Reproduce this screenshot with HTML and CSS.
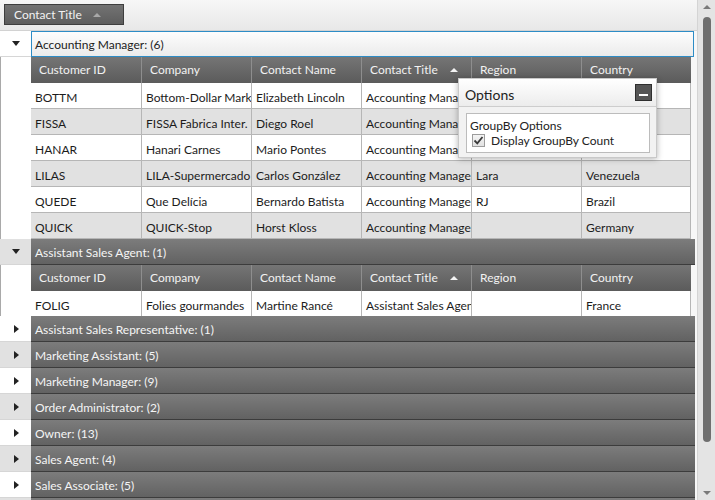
FILE: index.html
```html
<!DOCTYPE html>
<html>
<head>
<meta charset="utf-8">
<link rel="stylesheet" href="styles.css">
</head>
<body>
<div class="app">
  <div class="grid">
    <div class="groupby-bar">
      <div class="chip"><span>Contact Title</span><span class="tri-up light"></span></div>
    </div>

    <div class="group">
      <div class="group-row">
        <div class="expander"><span class="tri-down"></span></div>
        <div class="group-title selected">Accounting Manager: (6)</div>
      </div>
      <div class="group-body">
        <div class="gutter"></div>
        <div class="table">
          <div class="hdr-row">
            <div class="hcell">Customer ID</div>
            <div class="hcell">Company</div>
            <div class="hcell">Contact Name</div>
            <div class="hcell sorted">Contact Title<span class="tri-up"></span></div>
            <div class="hcell">Region</div>
            <div class="hcell">Country</div>
          </div>
          <div class="drow"><div class="cell">BOTTM</div><div class="cell">Bottom-Dollar Markets</div><div class="cell">Elizabeth Lincoln</div><div class="cell">Accounting Manager</div><div class="cell">BC</div><div class="cell">Canada</div></div>
          <div class="drow alt"><div class="cell">FISSA</div><div class="cell">FISSA Fabrica Inter. Salchichas S.A.</div><div class="cell">Diego Roel</div><div class="cell">Accounting Manager</div><div class="cell"></div><div class="cell">Spain</div></div>
          <div class="drow"><div class="cell">HANAR</div><div class="cell">Hanari Carnes</div><div class="cell">Mario Pontes</div><div class="cell">Accounting Manager</div><div class="cell">RJ</div><div class="cell">Brazil</div></div>
          <div class="drow alt"><div class="cell">LILAS</div><div class="cell">LILA-Supermercado</div><div class="cell">Carlos González</div><div class="cell">Accounting Manager</div><div class="cell">Lara</div><div class="cell">Venezuela</div></div>
          <div class="drow"><div class="cell">QUEDE</div><div class="cell">Que Delícia</div><div class="cell">Bernardo Batista</div><div class="cell">Accounting Manager</div><div class="cell">RJ</div><div class="cell">Brazil</div></div>
          <div class="drow alt"><div class="cell">QUICK</div><div class="cell">QUICK-Stop</div><div class="cell">Horst Kloss</div><div class="cell">Accounting Manager</div><div class="cell"></div><div class="cell">Germany</div></div>
        </div>
      </div>
    </div>

    <div class="group">
      <div class="group-row">
        <div class="expander grey"><span class="tri-down"></span></div>
        <div class="group-title">Assistant Sales Agent: (1)</div>
      </div>
      <div class="group-body">
        <div class="gutter"></div>
        <div class="table">
          <div class="hdr-row">
            <div class="hcell">Customer ID</div>
            <div class="hcell">Company</div>
            <div class="hcell">Contact Name</div>
            <div class="hcell sorted">Contact Title<span class="tri-up"></span></div>
            <div class="hcell">Region</div>
            <div class="hcell">Country</div>
          </div>
          <div class="drow last"><div class="cell">FOLIG</div><div class="cell">Folies gourmandes</div><div class="cell">Martine Rancé</div><div class="cell">Assistant Sales Agent</div><div class="cell"></div><div class="cell">France</div></div>
        </div>
      </div>
    </div>

    <div class="group-row"><div class="expander"><span class="tri-right"></span></div><div class="group-title">Assistant Sales Representative: (1)</div></div>
    <div class="group-row"><div class="expander grey"><span class="tri-right"></span></div><div class="group-title">Marketing Assistant: (5)</div></div>
    <div class="group-row"><div class="expander"><span class="tri-right"></span></div><div class="group-title">Marketing Manager: (9)</div></div>
    <div class="group-row"><div class="expander grey"><span class="tri-right"></span></div><div class="group-title">Order Administrator: (2)</div></div>
    <div class="group-row"><div class="expander"><span class="tri-right"></span></div><div class="group-title">Owner: (13)</div></div>
    <div class="group-row"><div class="expander grey"><span class="tri-right"></span></div><div class="group-title">Sales Agent: (4)</div></div>
    <div class="group-row"><div class="expander"><span class="tri-right"></span></div><div class="group-title">Sales Associate: (5)</div></div>
    <div class="group-row"><div class="expander grey"><span class="tri-right"></span></div><div class="group-title">Sales Manager: (3)</div></div>
  </div>

  <div class="scrollbar">
    <div class="sb-btn"><span class="sb-up"></span></div>
    <div class="sb-thumb"></div>
    <div class="sb-fill"></div>
    <div class="sb-btn"><span class="sb-down"></span></div>
  </div>

  <div class="options">
    <div class="opt-title">
      <span class="opt-title-text">Options</span>
      <span class="opt-min"><span class="opt-bar"></span></span>
    </div>
    <div class="opt-body">
      <div class="opt-box">
        <div class="opt-label">GroupBy Options</div>
        <label class="opt-check">
          <span class="checkbox">
            <svg width="11" height="11" viewBox="0 0 11 11"><path d="M1.5 5.5 L4.3 8.3 L9.5 2" fill="none" stroke="#3a3a3a" stroke-width="1.8"/></svg>
          </span>
          <span>Display GroupBy Count</span>
        </label>
      </div>
    </div>
  </div>
</div>
</body>
</html>
```

FILE: styles.css
```css
body {
  margin: 0;
  font-family: Lato, "Open Sans", sans-serif;
  font-size: 12px;
  color: #1c1c1c;
}

.app {
  position: relative;
  width: 715px;
  height: 500px;
  overflow: hidden;
  display: flex;
  background: #f7f7f7;
}

.grid {
  width: 697px;
  flex: none;
  display: flex;
  flex-direction: column;
}

.groupby-bar {
  height: 26px;
  padding: 4px 0 0 4px;
  border-bottom: 1px solid #d2d2d2;
  background: linear-gradient(#f7f7f7, #e8e8e8);
  flex: none;
}

.chip {
  box-sizing: border-box;
  width: 120px;
  height: 21px;
  border: 1px solid #3e3e3e;
  background: linear-gradient(#737373, #5d5d5d);
  color: #f2f2f2;
  display: flex;
  align-items: center;
  padding-left: 9px;
  gap: 11px;
}

.tri-up {
  width: 0;
  height: 0;
  border-left: 4px solid transparent;
  border-right: 4px solid transparent;
  border-bottom: 4px solid #f4f4f4;
}

.tri-up.light {
  border-bottom-color: #a8a8a8;
}

.tri-down {
  width: 0;
  height: 0;
  border-left: 4px solid transparent;
  border-right: 4px solid transparent;
  border-top: 5px solid #222;
}

.tri-right {
  width: 0;
  height: 0;
  margin-left: 2px;
  border-top: 4px solid transparent;
  border-bottom: 4px solid transparent;
  border-left: 5px solid #222;
}

.group {
  flex: none;
}

.group-row {
  display: flex;
  height: 26px;
  flex: none;
}

.expander {
  width: 31px;
  flex: none;
  box-sizing: border-box;
  display: flex;
  align-items: center;
  justify-content: center;
  background: #ffffff;
  border-bottom: 1px solid #d6d6d6;
}

.expander.grey {
  background: #e1e1e1;
}

.group-title {
  flex: 1;
  margin-right: 2px;
  box-sizing: border-box;
  display: flex;
  align-items: center;
  padding-left: 4px;
  padding-top: 1px;
  color: #f5f5f5;
  background: linear-gradient(#7c7c7c, #626262);
  border-bottom: 1px solid #3c3c3c;
  white-space: nowrap;
}

.group-title.selected {
  margin-right: 3px;
  padding-left: 3px;
  padding-top: 0;
  color: #222;
  background: linear-gradient(#fdfdfd, #ebebeb);
  border: 1px solid #2d8cc6;
}

.group-body {
  display: flex;
}

.gutter {
  width: 31px;
  flex: none;
  box-sizing: border-box;
  background: #ffffff;
  border-left: 1px solid #a9a9a9;
}

.table {
  width: 660px;
  flex: none;
}

.hdr-row {
  display: flex;
  height: 26px;
  background: linear-gradient(#757575, #5b5b5b);
  color: #f2f2f2;
}

.hcell {
  width: 110px;
  box-sizing: border-box;
  display: flex;
  align-items: center;
  padding-left: 8px;
  padding-bottom: 1px;
  border-left: 1px solid #8e8e8e;
  white-space: nowrap;
}

.hcell:first-child {
  border-left: none;
}

.hcell.sorted {
  justify-content: space-between;
  padding-right: 13px;
}

.drow {
  display: flex;
  height: 26px;
  box-sizing: border-box;
  background: #ffffff;
  border-bottom: 1px solid #b6b6b6;
  border-right: 1px solid #b6b6b6;
}

.drow.alt {
  background: #e1e1e1;
}

.drow.last {
  height: 25px;
  border-bottom: none;
}

.cell {
  width: 110px;
  flex: none;
  box-sizing: border-box;
  display: flex;
  align-items: center;
  padding-left: 4px;
  padding-top: 3px;
  border-left: 1px solid #b6b6b6;
  white-space: nowrap;
  overflow: hidden;
}

.cell:first-child {
  border-left: none;
}

.cell:last-child {
  width: 109px;
}

/* scrollbar */
.scrollbar {
  width: 18px;
  flex: none;
  box-sizing: border-box;
  border-left: 1px solid #d4d4d4;
  background: #e4e4e4;
  display: flex;
  flex-direction: column;
  align-items: center;
}

.sb-btn {
  height: 14px;
  width: 100%;
  display: flex;
  align-items: center;
  justify-content: center;
  flex: none;
}

.sb-up {
  width: 0;
  height: 0;
  border-left: 4px solid transparent;
  border-right: 4px solid transparent;
  border-bottom: 4px solid #7a7a7a;
}

.sb-down {
  width: 0;
  height: 0;
  border-left: 4px solid transparent;
  border-right: 4px solid transparent;
  border-top: 4px solid #7a7a7a;
}

.sb-thumb {
  margin-top: 3px;
  width: 8px;
  height: 425px;
  border-radius: 4px;
  background: #6f6f6f;
  flex: none;
}

.sb-fill {
  flex: 1;
}

/* options popup */
.options {
  position: absolute;
  left: 458px;
  top: 78px;
  width: 199px;
  height: 80px;
  box-sizing: border-box;
  border: 1px solid #c9c9c9;
  background: #f2f2f2;
  box-shadow: 0 1px 6px rgba(0, 0, 0, 0.3);
  display: flex;
  flex-direction: column;
}

.opt-title {
  height: 28px;
  flex: none;
  box-sizing: border-box;
  display: flex;
  align-items: center;
  justify-content: space-between;
  padding: 0 4px 0 6px;
  font-size: 14px;
  color: #222;
  background: linear-gradient(#ffffff, #ececec);
  border-bottom: 1px solid #cdcdcd;
}

.opt-title-text {
  padding-top: 3px;
}

.opt-min {
  width: 17px;
  height: 17px;
  box-sizing: border-box;
  border: 1px solid #2e2e2e;
  background: #555555;
  display: flex;
  justify-content: center;
  align-items: flex-end;
  padding-bottom: 4px;
}

.opt-bar {
  width: 9px;
  height: 2px;
  background: #ffffff;
}

.opt-body {
  flex: 1;
  padding: 6px 6px 4px 7px;
  display: flex;
}

.opt-box {
  flex: 1;
  border: 1px solid #bcbcbc;
  background: #ffffff;
  padding: 5px 0 0 3px;
  font-size: 12px;
  color: #222;
}

.opt-label {
  line-height: 14px;
}

.opt-check {
  display: flex;
  align-items: center;
  gap: 6px;
  margin-top: 0;
  padding-left: 2px;
}

.checkbox {
  width: 13px;
  height: 13px;
  box-sizing: border-box;
  border: 1px solid #9c9c9c;
  background: linear-gradient(#f4f4f4, #e2e2e2);
  display: flex;
  align-items: center;
  justify-content: center;
}
```
